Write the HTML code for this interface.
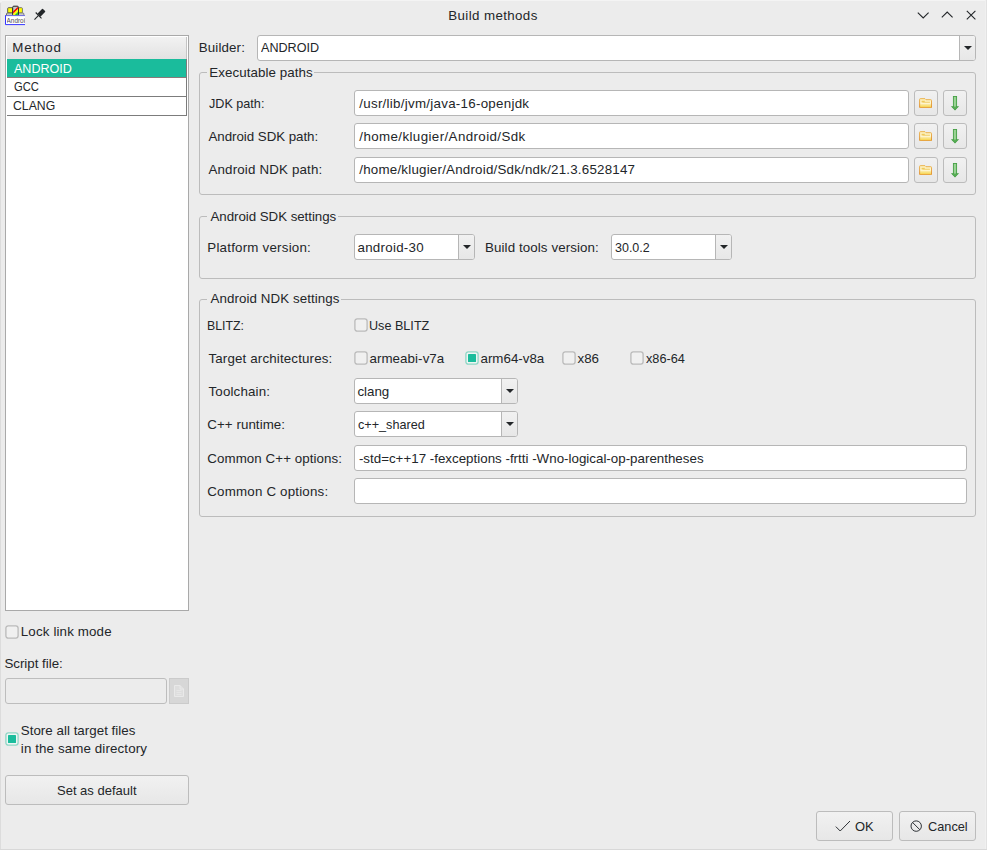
<!DOCTYPE html>
<html lang="en"><head><meta charset="utf-8"><title>Build methods</title>
<style>
html,body{margin:0;padding:0;}
body{width:987px;height:850px;overflow:hidden;background:#ececec;}
#win{position:relative;width:987px;height:850px;background:#ececec;overflow:hidden;
  font-family:"Liberation Sans",sans-serif;font-size:13.33px;color:#232629;}
#win *{box-sizing:border-box;}
.a{position:absolute;}
.t{position:absolute;white-space:pre;line-height:16px;font-size:13.33px;color:#232629;}
.inp{position:absolute;background:#fff;border:1px solid #b6b6b6;border-radius:3px;}
.btn{position:absolute;border:1px solid #bcbcbc;border-radius:3px;
  background:linear-gradient(#f1f1f1,#e7e7e7);}
.grp{position:absolute;border:1px solid #bcbcbc;border-radius:3px;}
.cap{position:absolute;background:#ececec;height:3px;}
.cb{position:absolute;width:13px;height:13px;border:1px solid #b4b4b4;border-radius:2px;background:#f1f1f1;}
.cb.on{border-color:#93d9c8;background:#eef6f4;}
.cb.on::after{content:"";position:absolute;left:2px;top:2px;width:7px;height:7px;background:#1abc9c;}
.combo{position:absolute;background:#fff;border:1px solid #b6b6b6;border-radius:3px;}
.combo .dd{position:absolute;right:0;top:0;bottom:0;width:16px;border-left:1px solid #b6b6b6;
  background:linear-gradient(#f1f1f1,#e7e7e7);border-radius:0 2px 2px 0;}
.combo .dd::after{content:"";position:absolute;left:50%;top:50%;margin:-2px 0 0 -4px;
  border-left:4px solid transparent;border-right:4px solid transparent;border-top:4px solid #232629;}

</style></head>
<body>
<div id="win">
<!-- window edges -->
<div class="a" style="left:0;top:0;width:987px;height:1px;background:#f4f4f4"></div>
<div class="a" style="left:0;top:3px;width:1px;height:847px;background:#dcdcdc"></div>
<div class="a" style="left:0;top:0;width:2px;height:2px;background:#f3f3f3"></div>
<div class="a" style="left:985px;top:0;width:2px;height:3px;background:#f5f5f5"></div>
<div class="a" style="left:985px;top:0;width:1px;height:850px;background:#f0f0f0"></div>
<div class="a" style="left:986px;top:0;width:1px;height:850px;background:#e2e2e2"></div>
<div class="a" style="left:0;top:849px;width:987px;height:1px;background:#d8d8d8"></div>

<!-- title bar: app icon -->
<svg class="a" style="left:5px;top:5px" width="21" height="21" viewBox="0 0 21 21">
  <rect x="2.7" y="2.7" width="5.2" height="5.4" rx="0.9" fill="#ff0" stroke="#4a4a4a" stroke-width="0.9"/>
  <rect x="13.2" y="2.7" width="4.2" height="5.4" rx="0.9" fill="#ff0" stroke="#6a6a6a" stroke-width="0.9"/>
  <path d="M1.5,10.4 V9 Q1.5,8 2.6,8 H7.8 V10.4 Z" fill="#d4d4d4" stroke="#4a4a4a" stroke-width="0.8"/>
  <path d="M13.2,8 H17.8 Q18.9,8 18.9,9 V10.4 H13.2 Z" fill="#d4d4d4" stroke="#6a6a6a" stroke-width="0.8"/>
  <rect x="7.7" y="1.2" width="5.7" height="9.6" rx="1.1" fill="#c3c9c9" stroke="#222" stroke-width="1"/>
  <polygon points="8.2,6.3 12.9,1.8 12.9,4 8.2,8.7" fill="#f00"/>
  <polygon points="8.2,8.7 12.9,4 12.9,6.9 9.5,10.3 8.2,10.3" fill="#ff0"/>
  <polygon points="9.5,10.3 12.9,6.9 12.9,10.3" fill="#1ec81e"/>
  <rect x="0.5" y="10.6" width="19.5" height="9" fill="#fff"/>
  <path d="M0.5,10.1 V19.6 H20" fill="none" stroke="#3434ff" stroke-width="1"/>
  <path d="M0.5,10.6 H20" fill="none" stroke="#6c6ce4" stroke-width="1"/>
</svg>
<div class="a" style="left:6.6px;top:17.1px;width:18.4px;height:7.4px;overflow:hidden;font-size:6.4px;line-height:8px;color:#4c4c4c;white-space:pre;letter-spacing:0px">Android</div>

<!-- pin icon -->
<svg class="a" style="left:30.6px;top:7.4px" width="16" height="16" viewBox="0 0 16 16">
  <g transform="rotate(45 8 8)">
    <rect x="5.85" y="0.9" width="4.3" height="7.3" rx="0.7" fill="#232629"/>
    <rect x="3.9" y="8" width="8.2" height="1.1" fill="#232629"/>
    <rect x="7.45" y="9" width="1.1" height="5.4" fill="#232629"/>
  </g>
</svg>

<!-- window controls -->
<svg class="a" style="left:914px;top:7px" width="66" height="16" viewBox="0 0 66 16" fill="none" stroke="#232629" stroke-width="1.1">
  <polyline points="3.8,5.6 9.2,11 14.6,5.6"/>
  <polyline points="27.8,10.4 33.2,5 38.6,10.4"/>
  <path d="M52.8,3.8 L61.4,12.4 M61.4,3.8 L52.8,12.4"/>
</svg>

<!-- method list -->
<div class="a" style="left:5px;top:35px;width:184px;height:576px;background:#fff;border:1px solid #a9a9a9"></div>
<div class="a" style="left:7px;top:37px;width:180px;height:22px;background:linear-gradient(#f2f2f2,#e2e2e2);border-right:1px solid #c4c4c4"></div>
<div class="a" style="left:7px;top:59px;width:179px;height:18px;background:#1abc9c"></div>
<div class="a" style="left:7px;top:77px;width:180px;height:1px;background:#8a7a7a"></div>
<div class="a" style="left:7px;top:96px;width:180px;height:1px;background:#7c7c7c"></div>
<div class="a" style="left:7px;top:115px;width:180px;height:1px;background:#7c7c7c"></div>
<div class="a" style="left:186px;top:59px;width:1px;height:57px;background:#7c7c7c"></div>

<!-- left bottom controls -->
<svg class="a" style="left:5px;top:625px" width="14" height="14" viewBox="0 0 14 14"><rect x="0.9" y="0.9" width="12.2" height="12.2" rx="2.3" fill="#f0f0f0" stroke="#bababa" stroke-width="1.3"/></svg>
<div class="inp" style="left:5px;top:678px;width:162px;height:26px;background:#ececec;border-color:#bdbdbd"></div>
<div class="a" style="left:169px;top:678px;width:20px;height:26px;background:#d7d7d7;border:1px solid #cbcbcb"></div>
<svg class="a" style="left:173px;top:684px" width="12" height="14" viewBox="0 0 12 14" fill="none" stroke="#e9e9e9" stroke-width="1">
  <path d="M1.5,1.5 H7 L10.5,5 V12.5 H1.5 Z" fill="#dedede"/><path d="M7,1.5 V5 H10.5"/>
  <path d="M3.5,6.5 H8.5 M3.5,8.5 H8.5 M3.5,10.5 H8.5" stroke-width="0.8"/>
</svg>
<svg class="a" style="left:5px;top:732px" width="14" height="14" viewBox="0 0 14 14"><rect x="0.9" y="0.9" width="12.2" height="12.2" rx="2.3" fill="#eef5f3" stroke="#8fd6c5" stroke-width="1.3"/><rect x="3" y="3" width="8" height="8" rx="0.6" fill="#1abc9c"/></svg>
<div class="btn" style="left:5px;top:775px;width:184px;height:30px"></div>

<!-- builder combo -->
<div class="combo" style="left:257px;top:35px;width:719px;height:26px"><div class="dd"></div></div>

<!-- group: executable paths -->
<div class="grp" style="left:199px;top:72px;width:777px;height:123px"></div>
<div class="cap" style="left:207px;top:71px;width:107px"></div>
<div class="inp" style="left:354px;top:90px;width:555px;height:26px"></div>
<div class="inp" style="left:354px;top:123px;width:555px;height:26px"></div>
<div class="inp" style="left:354px;top:157px;width:555px;height:26px"></div>
<div class="btn" style="left:914px;top:90px;width:24px;height:26px"></div>
<div class="btn" style="left:943px;top:90px;width:24px;height:26px"></div>
<div class="btn" style="left:914px;top:123px;width:24px;height:26px"></div>
<div class="btn" style="left:943px;top:123px;width:24px;height:26px"></div>
<div class="btn" style="left:914px;top:157px;width:24px;height:26px"></div>
<div class="btn" style="left:943px;top:157px;width:24px;height:26px"></div>

<!-- path button icons -->
<svg class="a" width="0" height="0" style="left:0;top:0"><defs>
  <linearGradient id="gf" x1="0" y1="0" x2="0" y2="1"><stop offset="0" stop-color="#fdf0b8"/><stop offset="0.45" stop-color="#fdf6d2"/><stop offset="1" stop-color="#f6cf36"/></linearGradient>
  <linearGradient id="gs" x1="0" y1="0" x2="0" y2="1"><stop offset="0" stop-color="#eab046"/><stop offset="1" stop-color="#e08b2c"/></linearGradient>
  <linearGradient id="ga" x1="0" y1="0" x2="1" y2="0"><stop offset="0" stop-color="#7cc477"/><stop offset="0.5" stop-color="#a9dba3"/><stop offset="1" stop-color="#6fbd6a"/></linearGradient>
</defs></svg>
<svg class="a" style="left:918.8px;top:97.5px" width="13.2" height="10.4" viewBox="0 0 13.7 10.9">
  <path d="M1.3,0.7 H6.2 L7.3,1.8 H12.3 Q13.1,1.8 13.1,2.6 V9.6 Q13.1,10.3 12.3,10.3 H1.3 Q0.6,10.3 0.6,9.6 V1.4 Q0.6,0.7 1.3,0.7 Z" fill="url(#gf)" stroke="url(#gs)" stroke-width="1"/>
  <path d="M2.6,3 H6.6 L5.6,4 H11.4 V5 H4.4 L3.4,4.6 H2.6 Z" fill="#efca5c"/>
  <path d="M1.6,5.6 H12.1" stroke="#fffbe6" stroke-width="0.8" opacity="0.7"/>
</svg>
<svg class="a" style="left:950px;top:95.5px" width="10" height="15" viewBox="0 0 10 15">
  <polygon points="0.9,10.3 9.1,10.3 5,14.6" fill="#3f9c3f"/>
  <rect x="3.4" y="0.5" width="3.2" height="10.6" fill="url(#ga)" stroke="#46a046" stroke-width="0.9"/>
  <polygon points="2.6,11 7.4,11 5,13.4" fill="#58ad55"/>
</svg>
<svg class="a" style="left:918.8px;top:130.5px" width="13.2" height="10.4" viewBox="0 0 13.7 10.9">
  <path d="M1.3,0.7 H6.2 L7.3,1.8 H12.3 Q13.1,1.8 13.1,2.6 V9.6 Q13.1,10.3 12.3,10.3 H1.3 Q0.6,10.3 0.6,9.6 V1.4 Q0.6,0.7 1.3,0.7 Z" fill="url(#gf)" stroke="url(#gs)" stroke-width="1"/>
  <path d="M2.6,3 H6.6 L5.6,4 H11.4 V5 H4.4 L3.4,4.6 H2.6 Z" fill="#efca5c"/>
  <path d="M1.6,5.6 H12.1" stroke="#fffbe6" stroke-width="0.8" opacity="0.7"/>
</svg>
<svg class="a" style="left:950px;top:128.5px" width="10" height="15" viewBox="0 0 10 15">
  <polygon points="0.9,10.3 9.1,10.3 5,14.6" fill="#3f9c3f"/>
  <rect x="3.4" y="0.5" width="3.2" height="10.6" fill="url(#ga)" stroke="#46a046" stroke-width="0.9"/>
  <polygon points="2.6,11 7.4,11 5,13.4" fill="#58ad55"/>
</svg>
<svg class="a" style="left:918.8px;top:164.5px" width="13.2" height="10.4" viewBox="0 0 13.7 10.9">
  <path d="M1.3,0.7 H6.2 L7.3,1.8 H12.3 Q13.1,1.8 13.1,2.6 V9.6 Q13.1,10.3 12.3,10.3 H1.3 Q0.6,10.3 0.6,9.6 V1.4 Q0.6,0.7 1.3,0.7 Z" fill="url(#gf)" stroke="url(#gs)" stroke-width="1"/>
  <path d="M2.6,3 H6.6 L5.6,4 H11.4 V5 H4.4 L3.4,4.6 H2.6 Z" fill="#efca5c"/>
  <path d="M1.6,5.6 H12.1" stroke="#fffbe6" stroke-width="0.8" opacity="0.7"/>
</svg>
<svg class="a" style="left:950px;top:162.5px" width="10" height="15" viewBox="0 0 10 15">
  <polygon points="0.9,10.3 9.1,10.3 5,14.6" fill="#3f9c3f"/>
  <rect x="3.4" y="0.5" width="3.2" height="10.6" fill="url(#ga)" stroke="#46a046" stroke-width="0.9"/>
  <polygon points="2.6,11 7.4,11 5,13.4" fill="#58ad55"/>
</svg>

<!-- group: SDK settings -->
<div class="grp" style="left:199px;top:216px;width:777px;height:63px"></div>
<div class="cap" style="left:207px;top:215px;width:131px"></div>
<div class="combo" style="left:354px;top:234px;width:121px;height:26px"><div class="dd"></div></div>
<div class="combo" style="left:611px;top:234px;width:121px;height:26px"><div class="dd"></div></div>

<!-- group: NDK settings -->
<div class="grp" style="left:199px;top:299px;width:777px;height:218px"></div>
<div class="cap" style="left:207px;top:298px;width:134px"></div>
<svg class="a" style="left:354px;top:318px" width="14" height="14" viewBox="0 0 14 14"><rect x="0.9" y="0.9" width="12.2" height="12.2" rx="2.3" fill="#f0f0f0" stroke="#bababa" stroke-width="1.3"/></svg>
<svg class="a" style="left:354px;top:351px" width="14" height="14" viewBox="0 0 14 14"><rect x="0.9" y="0.9" width="12.2" height="12.2" rx="2.3" fill="#f0f0f0" stroke="#bababa" stroke-width="1.3"/></svg>
<svg class="a" style="left:465px;top:351px" width="14" height="14" viewBox="0 0 14 14"><rect x="0.9" y="0.9" width="12.2" height="12.2" rx="2.3" fill="#eef5f3" stroke="#8fd6c5" stroke-width="1.3"/><rect x="3" y="3" width="8" height="8" rx="0.6" fill="#1abc9c"/></svg>
<svg class="a" style="left:562px;top:351px" width="14" height="14" viewBox="0 0 14 14"><rect x="0.9" y="0.9" width="12.2" height="12.2" rx="2.3" fill="#f0f0f0" stroke="#bababa" stroke-width="1.3"/></svg>
<svg class="a" style="left:630px;top:351px" width="14" height="14" viewBox="0 0 14 14"><rect x="0.9" y="0.9" width="12.2" height="12.2" rx="2.3" fill="#f0f0f0" stroke="#bababa" stroke-width="1.3"/></svg>
<div class="combo" style="left:354px;top:378px;width:164px;height:26px"><div class="dd"></div></div>
<div class="combo" style="left:354px;top:411px;width:164px;height:26px"><div class="dd"></div></div>
<div class="inp" style="left:354px;top:445px;width:613px;height:26px"></div>
<div class="inp" style="left:354px;top:478px;width:613px;height:26px"></div>

<!-- OK / Cancel -->
<div class="btn" style="left:816px;top:811px;width:77px;height:30px"></div>
<div class="btn" style="left:899px;top:811px;width:77px;height:30px"></div>
<svg class="a" style="left:834px;top:818px" width="18" height="16" viewBox="0 0 18 16" fill="none" stroke="#2e3236" stroke-width="1">
  <polyline points="1.8,8.6 6.2,13 16,3"/>
</svg>
<svg class="a" style="left:908px;top:818px" width="16" height="16" viewBox="0 0 16 16" fill="none" stroke="#2e3236" stroke-width="1">
  <circle cx="8.2" cy="8.1" r="5.2"/><path d="M4.5,4.4 L11.9,11.8"/>
</svg>

<!-- text labels -->
<span class="t" style="left:448.3px;top:7.7px;letter-spacing:0.378px;">Build methods</span>
<span class="t" style="left:12.3px;top:39.6px;letter-spacing:0.846px;">Method</span>
<span class="t" style="left:13.5px;top:60.5px;transform:scaleX(0.9419);transform-origin:0 0;color:#fff;">ANDROID</span>
<span class="t" style="left:13.5px;top:79.3px;transform:scaleX(0.8405);transform-origin:0 0;">GCC</span>
<span class="t" style="left:12.9px;top:98.3px;transform:scaleX(0.9190);transform-origin:0 0;">CLANG</span>
<span class="t" style="left:20.8px;top:623.5px;letter-spacing:0.146px;">Lock link mode</span>
<span class="t" style="left:4.4px;top:655.9px;letter-spacing:-0.011px;">Script file:</span>
<span class="t" style="left:20.8px;top:722.8px;letter-spacing:0.024px;">Store all target files</span>
<span class="t" style="left:20.8px;top:740.6px;letter-spacing:0.119px;">in the same directory</span>
<span class="t" style="left:57.4px;top:782.5px;transform:scaleX(0.9753);transform-origin:0 0;">Set as default</span>
<span class="t" style="left:198.8px;top:40.2px;letter-spacing:0.128px;">Builder:</span>
<span class="t" style="left:260.9px;top:40.2px;transform:scaleX(0.9452);transform-origin:0 0;">ANDROID</span>
<span class="t" style="left:209.3px;top:65.1px;letter-spacing:0.069px;">Executable paths</span>
<span class="t" style="left:208.5px;top:96.0px;transform:scaleX(0.9465);transform-origin:0 0;">JDK path:</span>
<span class="t" style="left:208.5px;top:128.9px;letter-spacing:-0.044px;">Android SDK path:</span>
<span class="t" style="left:208.5px;top:162.4px;letter-spacing:0.160px;">Android NDK path:</span>
<span class="t" style="left:359.3px;top:96.0px;letter-spacing:0.277px;">/usr/lib/jvm/java-16-openjdk</span>
<span class="t" style="left:359.3px;top:128.9px;letter-spacing:0.399px;">/home/klugier/Android/Sdk</span>
<span class="t" style="left:359.3px;top:162.4px;letter-spacing:0.218px;">/home/klugier/Android/Sdk/ndk/21.3.6528147</span>
<span class="t" style="left:210.5px;top:208.6px;letter-spacing:-0.052px;">Android SDK settings</span>
<span class="t" style="left:207.3px;top:239.8px;letter-spacing:0.219px;">Platform version:</span>
<span class="t" style="left:357.5px;top:239.8px;letter-spacing:0.263px;">android-30</span>
<span class="t" style="left:485.0px;top:239.8px;letter-spacing:0.101px;">Build tools version:</span>
<span class="t" style="left:614.7px;top:239.8px;transform:scaleX(0.9363);transform-origin:0 0;">30.0.2</span>
<span class="t" style="left:210.5px;top:291.2px;letter-spacing:0.078px;">Android NDK settings</span>
<span class="t" style="left:207.3px;top:317.8px;transform:scaleX(0.9225);transform-origin:0 0;">BLITZ:</span>
<span class="t" style="left:369.4px;top:317.8px;transform:scaleX(0.9466);transform-origin:0 0;">Use BLITZ</span>
<span class="t" style="left:208.5px;top:350.7px;letter-spacing:0.148px;">Target architectures:</span>
<span class="t" style="left:369.4px;top:350.7px;letter-spacing:0.081px;">armeabi-v7a</span>
<span class="t" style="left:480.5px;top:350.7px;letter-spacing:0.010px;">arm64-v8a</span>
<span class="t" style="left:577.5px;top:350.7px;letter-spacing:-0.000px;">x86</span>
<span class="t" style="left:646.4px;top:350.7px;transform:scaleX(0.9542);transform-origin:0 0;">x86-64</span>
<span class="t" style="left:208.5px;top:383.6px;letter-spacing:0.165px;">Toolchain:</span>
<span class="t" style="left:357.5px;top:383.6px;letter-spacing:-0.044px;">clang</span>
<span class="t" style="left:207.3px;top:417.1px;letter-spacing:0.059px;">C++ runtime:</span>
<span class="t" style="left:357.5px;top:417.1px;transform:scaleX(0.9474);transform-origin:0 0;">c++_shared</span>
<span class="t" style="left:207.3px;top:450.7px;letter-spacing:0.074px;">Common C++ options:</span>
<span class="t" style="left:358.9px;top:450.7px;letter-spacing:0.010px;">-std=c++17 -fexceptions -frtti -Wno-logical-op-parentheses</span>
<span class="t" style="left:207.3px;top:483.9px;letter-spacing:0.189px;">Common C options:</span>
<span class="t" style="left:854.6px;top:818.6px;transform:scaleX(0.9706);transform-origin:0 0;">OK</span>
<span class="t" style="left:927.5px;top:818.6px;transform:scaleX(0.9566);transform-origin:0 0;">Cancel</span>
</div>
</body></html>
